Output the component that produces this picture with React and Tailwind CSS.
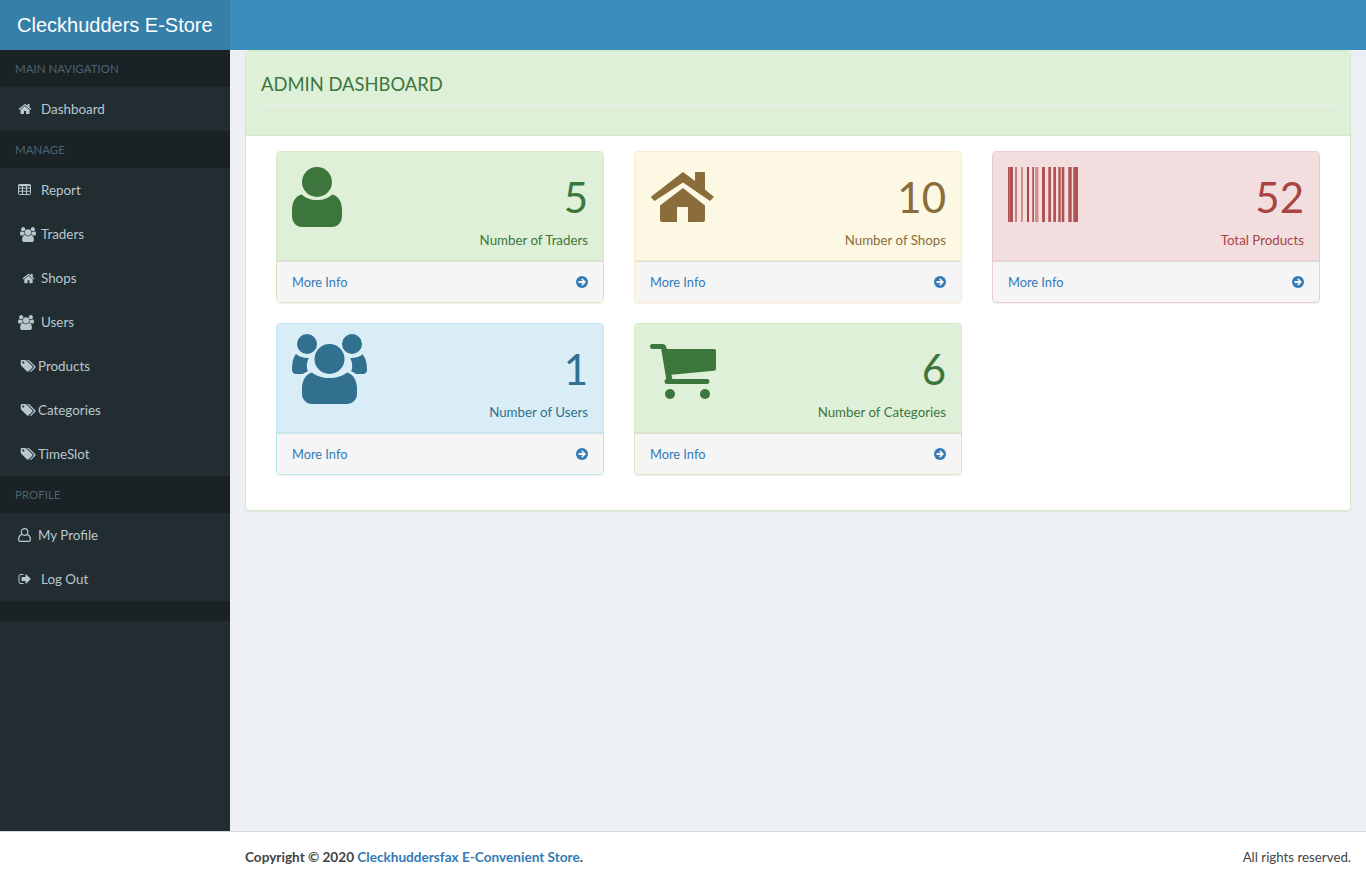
import React from "react";

const FONT = "font-['Lato','Open_Sans',sans-serif]";

function HomeIcon({ className }) {
  return (
    <svg viewBox="0 0 1792 1792" fill="currentColor" className={className}>
      <path d="M1472 992v480q0 26-19 45t-45 19h-384v-384h-256v384h-384q-26 0-45-19t-19-45v-480q0-1 .5-3t.5-3l575-474 575 474q1 2 1 6zm223-69l-62 74q-8 9-21 11h-3q-13 0-21-7l-692-577-692 577q-12 8-24 7-13-2-21-11l-62-74q-8-10-7-23.5t11-21.5l719-599q32-26 76-26t76 26l244 204v-195q0-14 9-23t23-9h192q14 0 23 9t9 23v408l219 182q10 8 11 21.5t-7 23.5z" />
    </svg>
  );
}

function UsersIcon({ className }) {
  return (
    <svg viewBox="0 0 1920 1792" fill="currentColor" className={className}>
      <path d="M593 896q-162 5-265 128h-134q-82 0-138-40.5t-56-118.5q0-353 124-353 6 0 43.5 21t97.5 42.5 119 21.5q67 0 133-23-5 37-5 66 0 139 81 256zm1071 637q0 120-73 189.5t-194 69.5h-874q-121 0-194-69.5t-73-189.5q0-53 3.5-103.5t14-109 26.5-108.5 43-97.5 62-81 85.5-53.5 111.5-20q10 0 43 21.5t73 48 107 48 135 21.5 135-21.5 107-48 73-48 43-21.5q61 0 111.5 20t85.5 53.5 62 81 43 97.5 26.5 108.5 14 109 3.5 103.5zm-1024-1277q0 106-75 181t-181 75-181-75-75-181 75-181 181-75 181 75 75 181zm704 384q0 159-112.5 271.5t-271.5 112.5-271.5-112.5-112.5-271.5 112.5-271.5 271.5-112.5 271.5 112.5 112.5 271.5zm576 225q0 78-56 118.5t-138 40.5h-134q-103-123-265-128 81-117 81-256 0-29-5-66 66 23 133 23 59 0 119-21.5t97.5-42.5 43.5-21q124 0 124 353zm-128-609q0 106-75 181t-181 75-181-75-75-181 75-181 181-75 181 75 75 181z" />
    </svg>
  );
}

function TagsIcon({ className }) {
  return (
    <svg viewBox="0 0 1984 1792" fill="currentColor" className={className}>
      <path d="M512 448q0-53-37.5-90.5t-90.5-37.5-90.5 37.5-37.5 90.5 37.5 90.5 90.5 37.5 90.5-37.5 37.5-90.5zm1067 576q0 53-37 90l-491 492q-39 37-91 37-53 0-90-37l-715-716q-38-37-64.5-101t-26.5-117v-416q0-52 38-90t90-38h416q53 0 117 26.5t102 64.5l715 714q37 39 37 91zm384 0q0 53-37 90l-491 492q-39 37-91 37-36 0-59-14t-53-45l470-470q37-37 37-90 0-52-37-91l-715-714q-38-38-102-64.5t-117-26.5h224q53 0 117 26.5t102 64.5l715 714q37 39 37 91z" />
    </svg>
  );
}

function TableIcon({ className }) {
  return (
    <svg viewBox="0 0 13 12" fill="none" stroke="currentColor" strokeWidth="1" className={className}>
      <rect x="0.5" y="0.5" width="12" height="10" rx="0.8" />
      <path strokeWidth="1.6" d="M0.5 1.4h12" />
      <path d="M0.5 4.2h12M0.5 7.2h12M4.5 1v9.5M8.5 1v9.5" />
    </svg>
  );
}

function UserOutlineIcon({ className }) {
  return (
    <svg viewBox="0 0 13 14" fill="none" stroke="currentColor" strokeWidth="1.2" className={className}>
      <circle cx="6.5" cy="4" r="3.3" />
      <path d="M3.6 6.6C1.8 7.3 0.7 8.7 0.7 10.6v0.8c0 1 .8 1.9 1.9 1.9h7.8c1.1 0 1.9-.9 1.9-1.9v-.8c0-1.9-1.1-3.3-2.9-4" />
    </svg>
  );
}

function SignOutIcon({ className }) {
  return (
    <svg viewBox="0 0 1792 1792" fill="currentColor" className={className}>
      <path d="M704 1440q0 4 1 20t.5 26.5-3 23.5-10 19.5-20.5 6.5h-320q-119 0-203.5-84.5t-84.5-203.5v-704q0-119 84.5-203.5t203.5-84.5h320q13 0 22.5 9.5t9.5 22.5q0 4 1 20t.5 26.5-3 23.5-10 19.5-20.5 6.5h-320q-66 0-113 47t-47 113v704q0 66 47 113t113 47h312l11.5 1 11.5 3 8 5.5 7 9 2 13.5zm928-544q0 26-19 45l-544 544q-19 19-45 19t-45-19-19-45v-288h-448q-26 0-45-19t-19-45v-384q0-26 19-45t45-19h448v-288q0-26 19-45t45-19 45 19l544 544q19 19 19 45z" />
    </svg>
  );
}

function ArrowCircle() {
  return (
    <svg viewBox="0 0 12 12" className="w-3 h-3 text-[#337ab7]">
      <circle cx="6" cy="6" r="6" fill="currentColor" />
      <path fill="#f5f5f5" d="M6.3 2.2 10 6l-3.7 3.8-1.2-1.2 1.700-1.700H2.500V5.100h4.300L5.100 3.400z" />
    </svg>
  );
}

function BigUser({ className }) {
  return (
    <svg viewBox="0 0 50 60" fill="currentColor" className={className}>
      <circle cx="25" cy="15" r="15" />
      <path d="M10 27.500c3 3.500 8.500 5.500 15 5.500s12-2 15-5.500c6 1 10 7 10 15.500v6c0 6.500-4.500 11-10 11H10C4.500 60 0 55.500 0 49v-6c0-8.500 4-14.500 10-15.500z" />
    </svg>
  );
}

function BigHouse({ className }) {
  return (
    <svg viewBox="0 0 64 50" fill="currentColor" className={className}>
      <path d="M33 0 45 9V0h10v17.500L64 25l-4 4L33 10.500 4.500 29 .7 25z" />
      <path d="M33 16 55 33.500V48c0 1.200-.8 2-2 2H38V35H27v15H12c-1.200 0-2-.8-2-2V33.500z" />
    </svg>
  );
}

// bar x offset, width, opacity - read off the reference
const BARS = [
  [0, 1.8, 0.9], [2, 3, 0.9], [7, 2, 0.6], [13, 2, 0.5], [19, 2, 1], [24.3, 1.7, 0.9], [27, 3.5, 0.5],
  [34, 3, 0.9], [40.3, 2.7, 0.9], [45.3, 2.7, 0.9], [50.3, 2.4, 0.9], [53.7, 2.6, 0.9], [60.3, 3.4, 0.9],
  [65.3, 4.7, 0.9],
];

function BigBarcode({ className }) {
  return (
    <svg viewBox="0 0 70 55" fill="currentColor" className={className}>
      {BARS.map(([x, w, o]) => (
        <rect key={x} x={x} y="0" width={w} height="55" opacity={o} />
      ))}
    </svg>
  );
}

function BigUsers({ className }) {
  return (
    <svg viewBox="0 0 75 70" fill="currentColor" className={className}>
      <circle cx="15" cy="10" r="10" />
      <circle cx="60" cy="10" r="10" />
      <path d="M4 20c3 2.500 7 4 12 4 .2 0 .5 0 .8 0-1.500 3-2 5.500-2 8 0 2 .4 3.700 1 5.500-2 .6-3.500 1.500-5 2.500H4c-2.500 0-4-1.700-4-4 0-6 1-12.500 4-16z" />
      <path d="M71 20c-3 2.500-7 4-12 4-.2 0-.5 0-.8 0 1.500 3 2 5.500 2 8 0 2-.4 3.700-1 5.500 2 .6 3.500 1.500 5 2.500h6.800c2.500 0 4-1.700 4-4 0-6-1-12.500-5-16z" />
      <circle cx="37.500" cy="25" r="15" />
      <path d="M20 38.500c4 3.500 10.500 5.500 17.500 5.500S51 42 55 38.500c6 1.500 10 8 10 15.500v6c0 5.500-4.500 10-10 10H20c-5.500 0-10-4.500-10-10v-6c0-7.500 4-14 10-15.500z" />
    </svg>
  );
}

function BigCart({ className }) {
  return (
    <svg viewBox="0 0 66 55" fill="currentColor" className={className}>
      <path d="M2 0h11c1.500 0 2.500 1 3 2.500L17 5h47c1.200 0 2 .8 2 2v17.500c0 1.200-.7 2-2 2.200l-42.500 4 .9 4.300H57c1.500 0 2.500 1 2.500 2.500S58.500 40 57 40H17c-1.500 0-2.500-1-2.500-2.500 0-1.200.7-2.100 1.700-2.400L11.200 5H2C.8 5 0 4 0 2.500S.8 0 2 0z" />
      <circle cx="20" cy="50" r="5" />
      <circle cx="55" cy="50" r="5" />
    </svg>
  );
}

function SectionLabel({ children }) {
  return (
    <div className="h-[37px] flex items-center pl-[15px] bg-[#1a2226] text-[#4b646f] text-[11.5px] uppercase">
      {children}
    </div>
  );
}

function NavItem({ icon, label }) {
  return (
    <a className="h-[44px] flex items-center pl-[18px] text-[13.4px] text-[#b8c7ce]">
      {icon}
      <span>{label}</span>
    </a>
  );
}

const tones = {
  success: { head: "bg-[#dff0d8] text-[#3c763d]", border: "border-[#d6e9c6]", line: "border-b-[#d6e9c6]" },
  warning: { head: "bg-[#fcf8e3] text-[#8a6d3b]", border: "border-[#faebcc]", line: "border-b-[#faebcc]" },
  danger: { head: "bg-[#f2dede] text-[#a94442]", border: "border-[#ebccd1]", line: "border-b-[#ebccd1]" },
  info: { head: "bg-[#d9edf7] text-[#31708f]", border: "border-[#bce8f1]", line: "border-b-[#bce8f1]" },
};

function StatCard({ tone, icon, value, label }) {
  const t = tones[tone];
  return (
    <div className={`h-[152px] border rounded-[4px] overflow-hidden shadow-[0_1px_1px_rgba(0,0,0,0.05)] ${t.border}`}>
      <div className={`h-[109px] border-b px-[15px] pt-[15px] flex justify-between ${t.head} ${t.line}`}>
        <div>{icon}</div>
        <div className="text-right">
          <div className="text-[42px] leading-[50px] mt-[5px]">{value}</div>
          <div className="text-[13.3px] leading-[20px] mt-[8px]">{label}</div>
        </div>
      </div>
      <div className="h-[41px] bg-[#f5f5f5] border-t border-[#ddd] px-[15px] flex items-center justify-between text-[12.8px] text-[#337ab7]">
        <span className="pt-[2px]">More Info</span>
        <ArrowCircle />
      </div>
    </div>
  );
}

export default function App() {
  return (
    <div className={`h-[882px] flex flex-col bg-[#ecf0f5] overflow-hidden ${FONT}`}>
      <header className="h-[50px] flex shrink-0 bg-[#3c8dbc]">
        <div className="w-[230px] bg-[#367fa9] pl-[17px] flex items-center text-white text-[20px] font-['Liberation_Sans',sans-serif]">
          Cleckhudders E-Store
        </div>
      </header>

      <div className="flex flex-1 min-h-0">
        <aside className="w-[230px] shrink-0 bg-[#222d32]">
          <SectionLabel>Main Navigation</SectionLabel>
          <NavItem label="Dashboard" icon={<span className="w-[23px]"><HomeIcon className="w-[14px] h-[14px]" /></span>} />
          <SectionLabel>Manage</SectionLabel>
          <NavItem label="Report" icon={<span className="w-[23px]"><TableIcon className="w-[13px] h-[12px]" /></span>} />
          <NavItem label="Traders" icon={<span className="w-[23px] pl-[2px]"><UsersIcon className="w-[16px] h-[15px]" /></span>} />
          <NavItem label="Shops" icon={<span className="w-[23px] pl-[4px]"><HomeIcon className="w-[13px] h-[13px]" /></span>} />
          <NavItem label="Users" icon={<span className="w-[23px]"><UsersIcon className="w-[16px] h-[15px]" /></span>} />
          <NavItem label="Products" icon={<span className="w-[20px] pl-[2px]"><TagsIcon className="w-[16px] h-[14px]" /></span>} />
          <NavItem label="Categories" icon={<span className="w-[20px] pl-[2px]"><TagsIcon className="w-[16px] h-[14px]" /></span>} />
          <NavItem label="TimeSlot" icon={<span className="w-[20px] pl-[2px]"><TagsIcon className="w-[16px] h-[14px]" /></span>} />
          <SectionLabel>Profile</SectionLabel>
          <NavItem label="My Profile" icon={<span className="w-[20px]"><UserOutlineIcon className="w-[13px] h-[14px]" /></span>} />
          <NavItem label="Log Out" icon={<span className="w-[23px]"><SignOutIcon className="w-[14px] h-[14px]" /></span>} />
          <div className="h-[20px] bg-[#1a2226]" />
        </aside>

        <main className="flex-1 px-[15px]">
          <div className="h-[461px] bg-white border border-[#d6e9c6] rounded-[4px] overflow-hidden shadow-[0_1px_1px_rgba(0,0,0,0.05)]">
            <div className="h-[85px] bg-[#dff0d8] border-b border-[#d6e9c6] px-[15px] pt-[20px]">
              <h1 className="text-[18.4px] leading-[26px] text-[#3c763d] pb-[7px] border-b border-[#eeeeee]">ADMIN DASHBOARD</h1>
            </div>
            <div className="grid grid-cols-[328px_328px_328px] gap-x-[30px] gap-y-[20px] pl-[30px] pt-[15px]">
              <StatCard tone="success" value="5" label="Number of Traders" icon={<BigUser className="w-[50px] h-[60px]" />} />
              <StatCard tone="warning" value="10" label="Number of Shops" icon={<BigHouse className="w-[64px] h-[50px] mt-[5px]" />} />
              <StatCard tone="danger" value="52" label="Total Products" icon={<BigBarcode className="w-[70px] h-[55px]" />} />
              <StatCard tone="info" value="1" label="Number of Users" icon={<BigUsers className="w-[75px] h-[70px] -mt-[5px]" />} />
              <StatCard tone="success" value="6" label="Number of Categories" icon={<BigCart className="w-[66px] h-[55px] mt-[5px]" />} />
            </div>
          </div>
        </main>
      </div>

      <footer className="h-[51px] shrink-0 bg-white border-t border-[#d2d6de] flex items-center justify-between pl-[245px] pr-[15px] text-[#444]">
        <div className="font-bold text-[13.6px]">
          Copyright © 2020 <span className="text-[#337ab7]">Cleckhuddersfax E-Convenient Store</span>.
        </div>
        <div className="text-[13.3px] pt-[2px]">All rights reserved.</div>
      </footer>
    </div>
  );
}
